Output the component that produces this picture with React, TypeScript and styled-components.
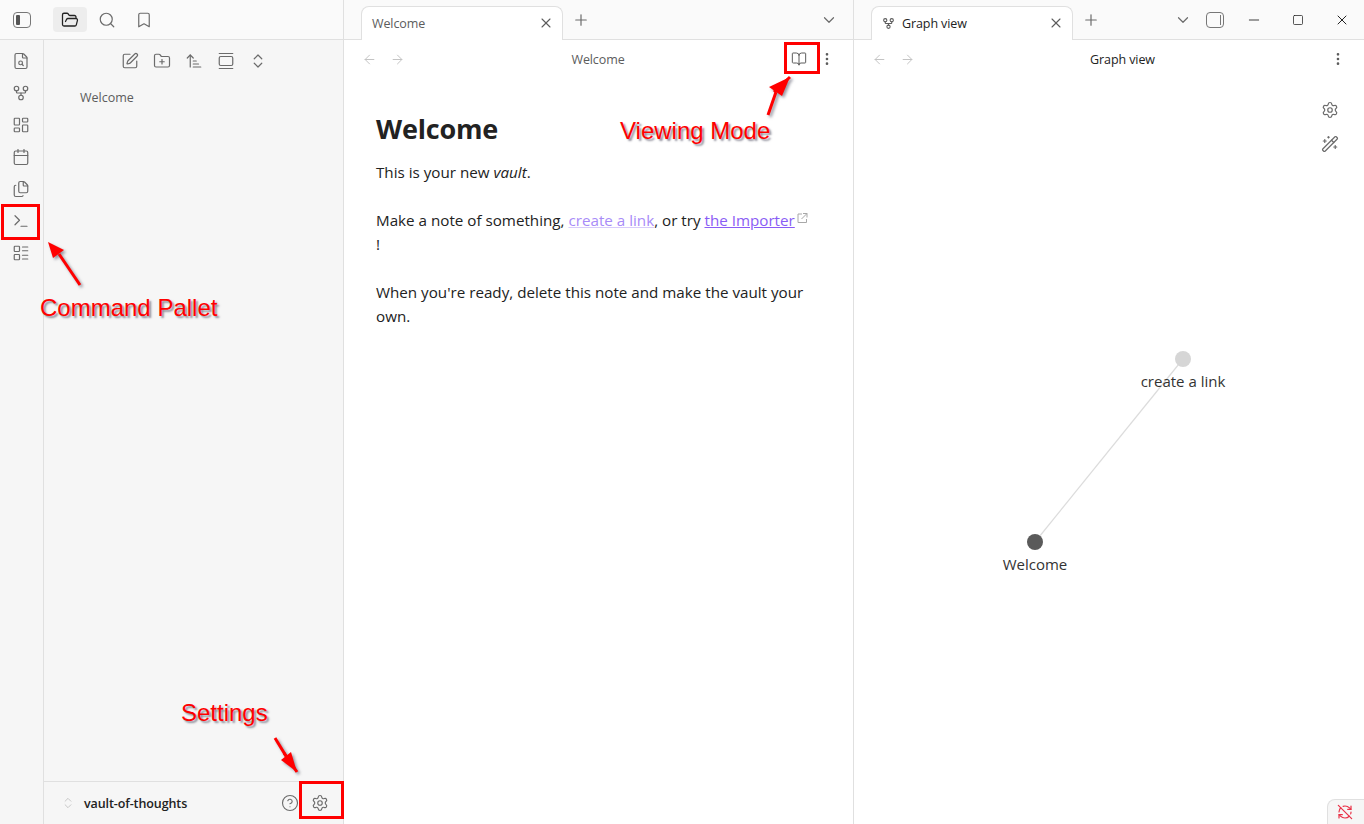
import { FC, ReactNode } from "react";
import styled, { createGlobalStyle } from "styled-components";
import {
  ArrowLeft,
  ArrowRight,
  ArrowUpNarrowWide,
  Bookmark,
  BookOpen,
  Calendar,
  ChevronDown,
  ChevronsUpDown,
  CircleHelp,
  Files,
  FileSearch,
  FolderOpen,
  FolderPlus,
  GalleryVertical,
  GitFork,
  LayoutDashboard,
  LayoutList,
  Minus,
  MoreVertical,
  Plus,
  RefreshCwOff,
  Search,
  Settings,
  Square,
  SquarePen,
  Terminal,
  WandSparkles,
  X,
} from "lucide-react";

const colors = {
  text: "#222222",
  muted: "#5c5c5c",
  icon: "#6b6b6b",
  faint: "#c4c4c4",
  border: "#e0e0e0",
  side: "#f6f6f6",
  tabBar: "#fafafa",
  link: "#8a5cf5",
  red: "#ff0000",
};

const GlobalStyle = createGlobalStyle`
  html, body {
    margin: 0;
    padding: 0;
    height: 100%;
    overflow: hidden;
    background: #fff;
    font-family: "Open Sans", "Noto Sans", sans-serif;
  }
  * { box-sizing: border-box; }
`;

const icon = { size: 18, strokeWidth: 1.6 };
const ribbonIcons = [FileSearch, GitFork, LayoutDashboard, Calendar, Files, Terminal, LayoutList];
const sideTools = [SquarePen, FolderPlus, ArrowUpNarrowWide, GalleryVertical, ChevronsUpDown];

type TabProps = { title: string; graph?: boolean };

const TabStrip: FC<TabProps & { children?: ReactNode }> = ({ title, graph, children }) => (
  <TabBar>
    <Tab>
      {graph && <GitFork size={13} strokeWidth={2} color={colors.muted} />}
      <TabTitle $dark={graph}>{title}</TabTitle>
      <TabClose>
        <X size={16} strokeWidth={1.6} />
      </TabClose>
    </Tab>
    <NewTab>
      <Plus {...icon} />
    </NewTab>
    {children}
  </TabBar>
);

const NavRow: FC<TabProps & { children?: ReactNode }> = ({ title, graph, children }) => (
  <NavBar>
    <NavArrows>
      <ArrowLeft size={15} strokeWidth={1.6} />
      <ArrowRight size={15} strokeWidth={1.6} />
    </NavArrows>
    <NavTitle $dark={graph}>{title}</NavTitle>
    <NavActions>
      {children}
      <MoreVertical size={16} strokeWidth={2} color={colors.muted} />
    </NavActions>
  </NavBar>
);

const App: FC = () => (
  <>
    <GlobalStyle />
    <Page>
      <LeftColumn>
        <LeftHeader>
          <PanelToggle />
          <SideTab $active>
            <FolderOpen size={18} strokeWidth={1.7} color={colors.text} />
          </SideTab>
          <SideTab>
            <Search {...icon} />
          </SideTab>
          <SideTab>
            <Bookmark {...icon} />
          </SideTab>
        </LeftHeader>
        <LeftBody>
          <Ribbon>
            {ribbonIcons.map((Icon, index) => (
              <RibbonButton key={index}>
                <Icon {...icon} />
              </RibbonButton>
            ))}
          </Ribbon>
          <Explorer>
            <ExplorerTools>
              {sideTools.map((Icon, index) => (
                <ToolButton key={index}>
                  <Icon {...icon} />
                </ToolButton>
              ))}
            </ExplorerTools>
            <FileItem>Welcome</FileItem>
            <VaultBar>
              <ChevronsUpDown size={14} strokeWidth={1.6} color={colors.faint} />
              <VaultName>vault-of-thoughts</VaultName>
              <VaultButtons>
                <CircleHelp size={18} strokeWidth={1.5} />
                <Settings size={18} strokeWidth={1.5} />
              </VaultButtons>
            </VaultBar>
          </Explorer>
        </LeftBody>
      </LeftColumn>

      <Pane $divider>
        <TabStrip title="Welcome">
          <TabMenu>
            <ChevronDown {...icon} />
          </TabMenu>
        </TabStrip>
        <NavRow title="Welcome">
          <BookOpen size={16} strokeWidth={1.5} color={colors.muted} />
        </NavRow>
        <Note>
          <NoteTitle>Welcome</NoteTitle>
          <NoteText>
            This is your new <em>vault</em>.
          </NoteText>
          <NoteText>
            Make a note of something, <GhostLink>create a link</GhostLink>, or try{" "}
            <ExternalLink>the Importer</ExternalLink>
            <ExternalMark viewBox="0 0 12 12">
              <path d="M6 2H2v8.500h8.500V7M7 1.500h4v4M11 1.500L5.500 7" />
            </ExternalMark>
            <br />!
          </NoteText>
          <NoteText>When you're ready, delete this note and make the vault your own.</NoteText>
        </Note>
      </Pane>

      <Pane>
        <TabStrip title="Graph view" graph>
          <WindowControls>
            <TabMenu $flat>
              <ChevronDown {...icon} />
            </TabMenu>
            <RightToggle />
            <WindowButton>
              <Minus size={16} strokeWidth={1.3} />
            </WindowButton>
            <WindowButton>
              <Square size={12} strokeWidth={1.5} />
            </WindowButton>
            <WindowButton>
              <X size={16} strokeWidth={1.5} />
            </WindowButton>
          </WindowControls>
        </TabStrip>
        <NavRow title="Graph view" graph />
        <Graph>
          <GraphTools>
            <Settings {...icon} />
            <WandSparkles {...icon} />
          </GraphTools>
          <GraphCanvas viewBox="0 0 510 746">
            <line x1="181" y1="464" x2="329" y2="281" stroke="#dcdcdc" strokeWidth="1.2" />
            <circle cx="329" cy="281" r="8" fill="#d6d6d6" />
            <circle cx="181" cy="464" r="8" fill="#5a5a5a" />
          </GraphCanvas>
          <NodeLabel $x={329} $y={293}>
            create a link
          </NodeLabel>
          <NodeLabel $x={181} $y={476}>
            Welcome
          </NodeLabel>
          <SyncBadge>
            <RefreshCwOff size={16} strokeWidth={1.8} />
          </SyncBadge>
        </Graph>
      </Pane>

      <Callout $x={1} $y={204} $w={39} $h={36} />
      <Callout $x={784} $y={42} $w={36} $h={32} />
      <Callout $x={299} $y={781} $w={45} $h={38} />
      <AnnotationLabel $x={40} $y={293}>
        Command Pallet
      </AnnotationLabel>
      <AnnotationLabel $x={620} $y={116}>
        Viewing Mode
      </AnnotationLabel>
      <AnnotationLabel $x={181} $y={698}>
        Settings
      </AnnotationLabel>
      <ArrowLayer viewBox="0 0 1364 824">
        <path d="M80 285L59 254M790 77L774 92M297 772L284 753" />
        <polygon points="48,242 64,250 53,258" />
        <polygon points="790,77 769,87 782,96" />
        <polygon points="297,772 281,760 291,752" />
        <path d="M768 115L776 92M275 738L286 756" />
      </ArrowLayer>
    </Page>
  </>
);

export default App;

const Page = styled.div`
  position: relative;
  display: grid;
  grid-template-columns: 344px 510px 510px;
  width: 1364px;
  height: 824px;
  overflow: hidden;
  color: ${colors.text};
`;
const LeftColumn = styled.div`
  display: flex;
  flex-direction: column;
  border-right: 1px solid ${colors.border};
`;
const LeftHeader = styled.div`
  display: flex;
  align-items: center;
  height: 40px;
  padding-left: 12px;
  border-bottom: 1px solid ${colors.border};
  background: ${colors.tabBar};
  color: ${colors.icon};
`;
const PanelToggle = styled.span`
  position: relative;
  width: 18px;
  height: 16px;
  margin-right: 22px;
  margin-left: 1px;
  border: 1.5px solid #777;
  border-radius: 4px;
  &::before {
    content: "";
    position: absolute;
    left: 2px;
    top: 2px;
    bottom: 2px;
    width: 4px;
    background: #555;
    border-radius: 1px;
  }
`;
const SideTab = styled.span<{ $active?: boolean }>`
  display: flex;
  align-items: center;
  justify-content: center;
  width: 34px;
  height: 25px;
  margin-right: 3px;
  border-radius: 4px;
  background: ${(p) => (p.$active ? "#ededed" : "transparent")};
`;
const LeftBody = styled.div`
  flex: 1;
  display: flex;
  min-height: 0;
`;
const Ribbon = styled.div`
  display: flex;
  flex-direction: column;
  align-items: center;
  width: 44px;
  padding-top: 5px;
  padding-right: 1px;
  background: ${colors.side};
  border-right: 1px solid ${colors.border};
  color: ${colors.icon};
`;
const RibbonButton = styled.span`
  display: flex;
  align-items: center;
  justify-content: center;
  height: 32px;
`;
const Explorer = styled.div`
  flex: 1;
  display: flex;
  flex-direction: column;
  background: ${colors.side};
`;
const ExplorerTools = styled.div`
  display: flex;
  justify-content: center;
  gap: 14px;
  padding-top: 12px;
  color: ${colors.icon};
`;
const ToolButton = styled.span`
  display: flex;
  width: 18px;
  height: 18px;
`;
const FileItem = styled.div`
  padding: 19px 0 0 36px;
  font-size: 12.500px;
  line-height: 18px;
  color: ${colors.muted};
`;
const VaultBar = styled.div`
  display: flex;
  align-items: center;
  height: 43px;
  margin-top: auto;
  padding: 0 14px 0 17px;
  border-top: 1px solid ${colors.border};
`;
const VaultName = styled.span`
  margin-left: 9px;
  font-size: 12.500px;
  font-weight: 600;
  letter-spacing: -0.1px;
`;
const VaultButtons = styled.div`
  display: flex;
  gap: 12px;
  margin-left: auto;
  color: ${colors.icon};
`;
const Pane = styled.div<{ $divider?: boolean }>`
  display: flex;
  flex-direction: column;
  min-width: 0;
  border-right: ${(p) => (p.$divider ? `1px solid ${colors.border}` : "none")};
`;
const TabBar = styled.div`
  display: flex;
  align-items: flex-end;
  height: 40px;
  padding-left: 17px;
  background: ${colors.tabBar};
  border-bottom: 1px solid ${colors.border};
`;
const Tab = styled.div`
  position: relative;
  display: flex;
  align-items: center;
  gap: 7px;
  width: 202px;
  height: 34px;
  margin-bottom: -1px;
  padding: 0 8px 1px 10px;
  background: #fff;
  border: 1px solid ${colors.border};
  border-bottom: none;
  border-radius: 8px 8px 0 0;
`;
const TabTitle = styled.span<{ $dark?: boolean }>`
  flex: 1;
  font-size: 12.500px;
  letter-spacing: -0.1px;
  color: ${(p) => (p.$dark ? colors.text : colors.muted)};
`;
const TabClose = styled.span`
  display: flex;
  color: ${colors.muted};
`;
const NewTab = styled.span`
  display: flex;
  align-self: center;
  margin: 0 0 0 9px;
  color: ${colors.icon};
`;
const TabMenu = styled.span<{ $flat?: boolean }>`
  display: flex;
  align-self: center;
  margin-left: ${(p) => (p.$flat ? "0" : "auto")};
  margin-right: ${(p) => (p.$flat ? "0" : "15px")};
  color: ${colors.icon};
`;
const WindowControls = styled.div`
  display: flex;
  align-items: center;
  align-self: center;
  margin-left: auto;
  height: 24px;
`;
const RightToggle = styled.span`
  position: relative;
  width: 18px;
  height: 16px;
  margin: 0 8px 0 14px;
  border: 1.5px solid #777;
  border-radius: 4px;
  &::after {
    content: "";
    position: absolute;
    right: 2px;
    top: 2px;
    bottom: 2px;
    width: 1.5px;
    background: #777;
  }
`;
const WindowButton = styled.span`
  display: flex;
  justify-content: center;
  width: 44px;
  color: ${colors.text};
`;
const NavBar = styled.div`
  display: flex;
  align-items: center;
  height: 38px;
  padding: 0 18px 0 18px;
`;
const NavArrows = styled.div`
  display: flex;
  gap: 13px;
  color: ${colors.faint};
`;
const NavTitle = styled.div<{ $dark?: boolean }>`
  flex: 1;
  text-align: center;
  font-size: 12.500px;
  letter-spacing: -0.1px;
  color: ${(p) => (p.$dark ? colors.text : colors.muted)};
`;
const NavActions = styled.div`
  display: flex;
  align-items: center;
  gap: 12px;
`;
const Note = styled.div`
  padding: 33px 32px 0;
`;
const NoteTitle = styled.h1`
  margin: 0 0 13px;
  font-size: 27px;
  line-height: 36px;
  font-weight: 700;
  letter-spacing: -0.2px;
`;
const NoteText = styled.p`
  margin: 0 0 24px;
  font-size: 15.200px;
  line-height: 24px;
`;
const GhostLink = styled.span`
  color: #a88bf8;
  text-decoration: underline;
  text-decoration-color: #d8ccfb;
`;
const ExternalLink = styled.span`
  color: ${colors.link};
  text-decoration: underline;
`;
const ExternalMark = styled.svg`
  width: 12px;
  height: 12px;
  margin-left: 1px;
  fill: none;
  stroke: #a8a8a8;
  stroke-width: 1;
  vertical-align: 2px;
`;
const Graph = styled.div`
  position: relative;
  flex: 1;
  min-height: 0;
`;
const GraphCanvas = styled.svg`
  display: block;
  width: 100%;
  height: 100%;
`;
const GraphTools = styled.div`
  position: absolute;
  top: 23px;
  right: 25px;
  display: flex;
  flex-direction: column;
  gap: 16px;
  color: ${colors.icon};
`;
const NodeLabel = styled.span<{ $x: number; $y: number }>`
  position: absolute;
  left: ${(p) => p.$x}px;
  top: ${(p) => p.$y}px;
  transform: translateX(-50%);
  font-size: 15px;
  line-height: 20px;
  white-space: nowrap;
  color: #333;
`;
const SyncBadge = styled.div`
  position: absolute;
  right: -1px;
  bottom: 0;
  display: flex;
  align-items: center;
  justify-content: center;
  width: 38px;
  height: 25px;
  padding-right: 3px;
  background: ${colors.side};
  border: 1px solid ${colors.border};
  border-bottom: none;
  border-radius: 8px 0 0 0;
  color: #e93147;
`;
const Callout = styled.div<{ $x: number; $y: number; $w: number; $h: number }>`
  position: absolute;
  left: ${(p) => p.$x}px;
  top: ${(p) => p.$y}px;
  width: ${(p) => p.$w}px;
  height: ${(p) => p.$h}px;
  border: 3px solid ${colors.red};
`;
const AnnotationLabel = styled.span<{ $x: number; $y: number }>`
  position: absolute;
  left: ${(p) => p.$x}px;
  top: ${(p) => p.$y}px;
  font-family: "Liberation Sans", Arial, sans-serif;
  font-size: 24px;
  line-height: 30px;
  white-space: nowrap;
  color: ${colors.red};
  text-shadow: 2px 2px 2px rgba(70, 70, 90, 0.6);
`;
const ArrowLayer = styled.svg`
  position: absolute;
  inset: 0;
  width: 1364px;
  height: 824px;
  pointer-events: none;
  fill: ${colors.red};
  stroke: none;
  filter: drop-shadow(2px 2px 1.500px rgba(70, 70, 90, 0.55));
  path {
    fill: none;
    stroke: ${colors.red};
    stroke-width: 3;
  }
`;
